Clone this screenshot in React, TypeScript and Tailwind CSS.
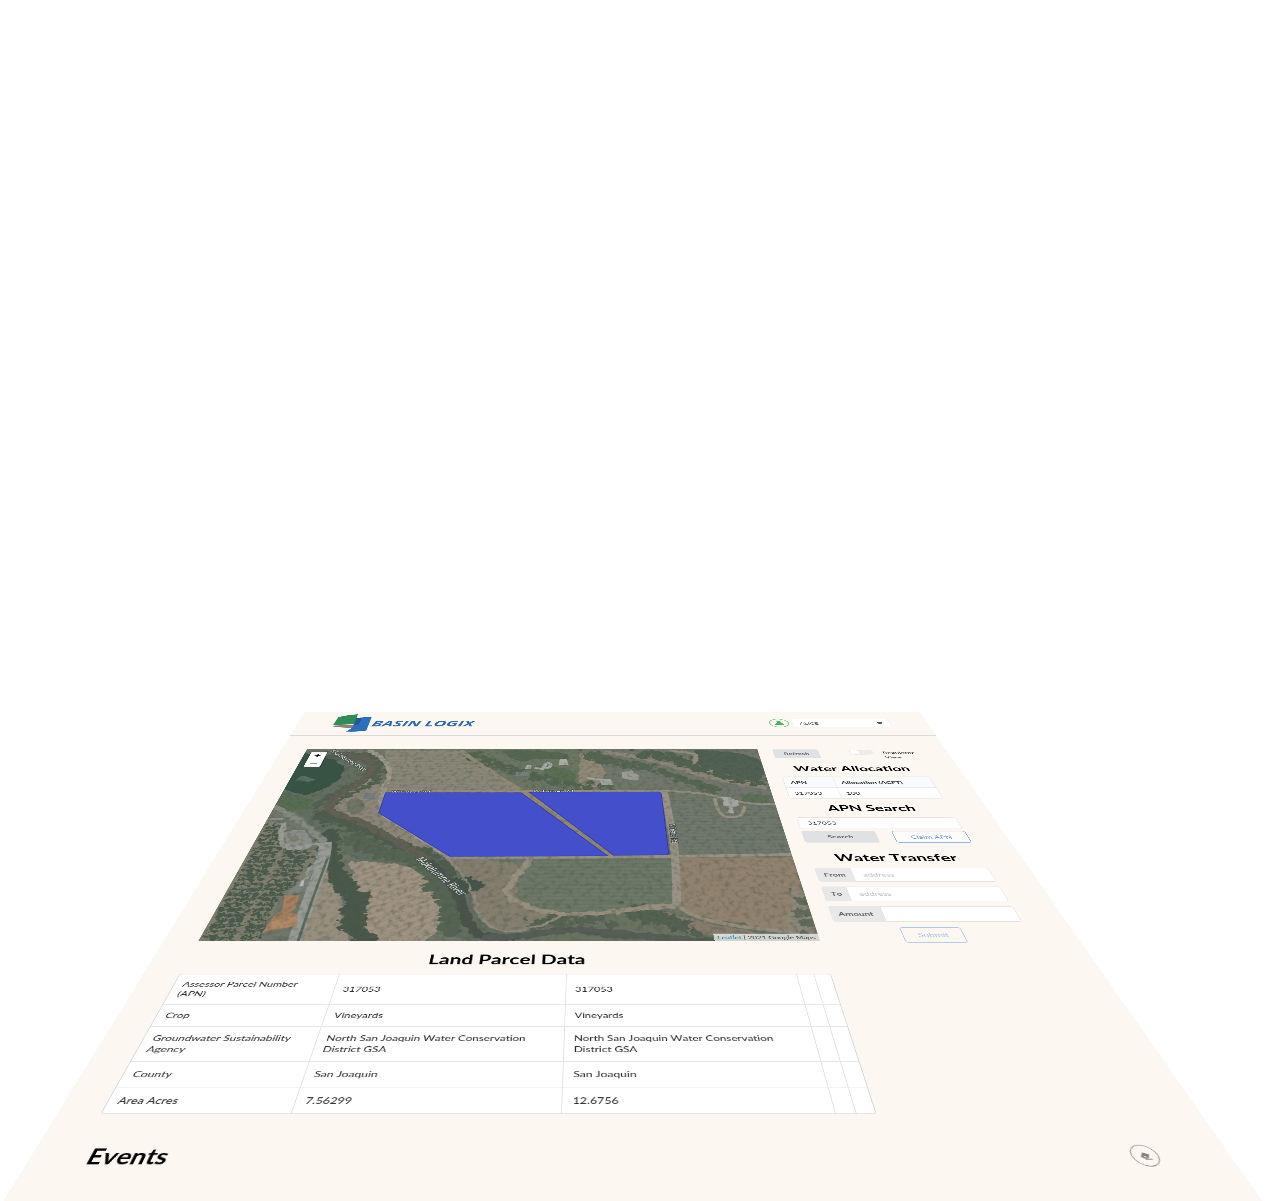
import React from "react";

const HORIZON_X = 592.4;
const HORIZON_Y = 245;
const DEPTH = 466.5;

/** Converts a point of the tilted view into the map's own flat coordinates. */
function flat(x: number, y: number): [number, number] {
  const d = DEPTH / (y - HORIZON_Y);
  return [((x - HORIZON_X) * d + 286.4) / 0.484 - 46.5, (1 - d) / 0.000425 - 175];
}

function parse(list: string): [number, number][] {
  return list.split(" ").map((p) => {
    const [x, y] = p.split(",").map(Number);
    return flat(x, y);
  });
}

function straight(list: string): string {
  return "M" + parse(list).map((p) => p.map((n) => n.toFixed(1)).join(",")).join("L");
}

function smooth(list: string): string {
  const p = parse(list);
  let out = `M${p[0][0]},${p[0][1]}`;
  for (let i = 1; i < p.length - 1; i++) {
    const mx = (p[i][0] + p[i + 1][0]) / 2;
    const my = (p[i][1] + p[i + 1][1]) / 2;
    out += `Q${p[i][0]},${p[i][1]} ${mx},${my}`;
  }
  const l = p[p.length - 1];
  return out + `L${l[0]},${l[1]}`;
}

const Area = ({ p, c, o }: { p: string; c: string; o?: number }) => <path d={smooth(p) + "Z"} fill={c} opacity={o} />;
const Field = ({ p, c }: { p: string; c: string }) => <path d={straight(p) + "Z"} fill={c} />;
const Track = ({ p, c, w }: { p: string; c: string; w: number }) => (
  <path d={smooth(p)} fill="none" stroke={c} strokeWidth={w} strokeLinejoin="round" />
);

const orchard = Array.from({ length: 1250 }, (_, i) => {
  const col = i % 42;
  const row = Math.floor(i / 42);
  const j = (i * 7919) % 13;
  return { x: col * 7.2 + (j % 5), y: 225 + row * 13 + (j % 4), w: 7 + (j % 4), h: 8 + (j % 5), skip: (i * 31) % 7 === 0 };
});

const trees = (list: string, n: number) => {
  const p = parse(list);
  return Array.from({ length: n }, (_, i) => {
    const t = (i / n) * (p.length - 1);
    const k = Math.floor(t);
    const f = t - k;
    const a = ((i * 37) % 29) - 14;
    const b = ((i * 53) % 31) - 15;
    return {
      x: p[k][0] + (p[k + 1][0] - p[k][0]) * f + a,
      y: p[k][1] + (p[k + 1][1] - p[k][1]) * f + b,
      r: 4 + ((i * 17) % 7),
    };
  });
};

const Grove = ({ p, n, c }: { p: string; n: number; c: string }) => (
  <g fill={c}>
    {trees(p, n).map((t, i) => (
      <ellipse key={i} cx={t.x} cy={t.y} rx={t.r} ry={t.r * 1.1} />
    ))}
  </g>
);

const MID_FIELD = "535,857 676,857 676,907 640,907 600,914 550,914 514,899";
const EAST_FIELD = "669,792 715,795 718,817 742,817 746,806 773,805 790,852 677,853";
const NORTH_FIELD = "385,750 465,750 522,792 386,792 391,772";
const TAN_FIELD = "350,860 400,863 418,870 440,893 446,905 437,930 420,945 375,945 360,925 361,900";

function Aerial() {
  return (
    <svg viewBox="0 0 861 600" className="block h-[600px] w-[861px]" preserveAspectRatio="none">
      <defs>
        <filter id="rough" x="0" y="0" width="100%" height="100%">
          <feTurbulence type="fractalNoise" baseFrequency="0.06" numOctaves="3" seed="4" />
          <feDisplacementMap in="SourceGraphic" scale="12" xChannelSelector="R" yChannelSelector="G" />
        </filter>
        <filter id="leafy" x="0" y="0" width="100%" height="100%">
          <feTurbulence type="fractalNoise" baseFrequency="0.12" numOctaves="3" seed="14" />
          <feDisplacementMap in="SourceGraphic" scale="16" xChannelSelector="R" yChannelSelector="G" />
        </filter>
        <filter id="grain" x="0" y="0" width="100%" height="100%" colorInterpolationFilters="sRGB">
          <feTurbulence type="fractalNoise" baseFrequency="0.11 0.09" numOctaves="4" seed="9" />
          <feColorMatrix values="0 0 0 0 0.22  0 0 0 0 0.28  0 0 0 0 0.22  2.2 0 0 0 -1" />
        </filter>
        <pattern id="rows" width="8" height="10" patternUnits="userSpaceOnUse">
          <rect width="8" height="4" fill="#3a4434" opacity="0.1" />
        </pattern>
        <pattern id="furrow" width="13" height="13" patternUnits="userSpaceOnUse" patternTransform="rotate(-32)">
          <rect width="13" height="4" fill="#6f6150" opacity="0.14" />
        </pattern>
        <clipPath id="orchardArea">
          <path d={straight("236,824 262,822 280,824 281,846 300,851 314,851 318,862 300,880 284,893 270,912 262,941 190,941") + "Z"} />
        </clipPath>
      </defs>
      <rect width="861" height="600" fill="#6b7264" />
      <g filter="url(#rough)">
        <Area p="325,750 370,755 385,775 350,800 400,815 460,860 500,930 520,941 440,941 440,890 400,862 350,860 320,830 280,800 250,820 290,775" c="#5c6759" />
        <Area p="290,752 320,754 345,763 343,776 330,786 313,794 300,794 285,790 280,775" c="#2c483b" />
        <Area p="300,776 310,777 318,779 308,782 299,780" c="#5f756b" o={0.7} />
        <Area p="285,791 300,797 316,799 303,812 276,808 274,798" c="#4f6648" />
        <Area p="368,776 386,783 378,812 395,825 440,852 400,842 360,822 330,808 334,797" c="#8b8374" />
        <Area p="350,798 368,800 362,815 345,812" c="#6d705f" />
        <Field p={NORTH_FIELD} c="#8a8574" />
        <Field p="470,750 580,750 578,791 530,791" c="#65705b" />
        <Area p="500,750 570,750 570,762 545,758 520,762" c="#4d6148" />
        <Area p="540,765 575,768 578,786 550,780" c="#53684c" />
        <Field p="580,752 598,756 618,768 604,774 602,786 579,788" c="#918573" />
        <Area p="590,750 640,750 700,765 770,778 776,800 700,786 640,784 610,775" c="#6d7268" />
        <Track p="605,752 650,758 680,768 720,780 768,788" c="#8b8276" w={16} />
        <Area p="695,750 757,750 768,783 735,776 702,767 690,760" c="#46594a" />
        <Track p="668,750 692,752 697,758 690,764 700,768 730,777 768,785" c="#928a7c" w={10} />
        <Field p={EAST_FIELD} c="#6c7568" />
        <Field p="740,793 768,795 772,804 744,804" c="#566b4f" />
        <Field p="680,857 792,857 818,941 760,941 700,922 677,905" c="#917f6a" />
        <Area p="791,885 803,895 818,941 785,930 792,910" c="#8c8574" />
        <Field p={MID_FIELD} c="#697563" />
        <Area p="450,857 528,857 512,895 545,914 560,922 495,932 478,918 472,895" c="#827a6a" />
        <Area p="560,915 640,906 690,915 820,937 820,945 480,945" c="#656e5c" />
        <Area p="640,905 700,922 780,935 700,938 655,920" c="#847868" />
        <Field p="232,822 282,822 284,848 316,850 320,862 286,893 264,925 262,945 190,945" c="#7f7b6a" />
        <Area p={TAN_FIELD} c="#a19281" />
        <Field p="326,868 334,880 343,900 342,922 352,945 298,945" c="#998c7b" />
      </g>
      <g filter="url(#leafy)">
        <g clipPath="url(#orchardArea)" fill="#3f5245">
          {orchard.map((o, i) => (o.skip ? null : <ellipse key={i} cx={o.x} cy={o.y} rx={o.w / 2} ry={o.h / 2} />))}
        </g>
        <Grove p="333,755 368,756 380,768 368,782 342,795 322,809" n={60} c="#4b5948" />
        <Grove p="322,812 345,822 380,836 410,850 440,868 450,885" n={100} c="#445444" />
        <Grove p="330,830 332,860 342,882 355,900 352,925 368,938" n={110} c="#3f5041" />
        <Grove p="350,835 385,855 425,858 435,880 450,900 452,930" n={110} c="#4d5d4b" />
        <Grove p="588,753 612,762 650,768 700,785 718,790" n={60} c="#505f48" />
        <Grove p="640,753 670,756 690,766 730,778 768,782" n={50} c="#4a5a47" />
        <Grove p="470,752 492,764 520,772 560,784 620,787" n={46} c="#4c5c47" />
        <Grove p="535,925 552,918 580,922 612,920" n={20} c="#505b4b" />
        <Grove p="632,908 650,915 670,922 690,930" n={26} c="#4c5a49" />
        <Grove p="458,880 478,890" n={14} c="#3b4c40" />
        <Grove p="802,895 806,915 812,932" n={12} c="#5b6456" />
      </g>
      <path d={smooth(TAN_FIELD) + "Z"} fill="url(#furrow)" />
      <path d={straight(MID_FIELD) + "Z"} fill="url(#rows)" />
      <path d={straight(EAST_FIELD) + "Z"} fill="url(#rows)" />
      <path d={straight(NORTH_FIELD) + "Z"} fill="url(#rows)" opacity="0.6" />
      <g filter="url(#rough)">
        <Track p="333,753 357,755 372,762 373,770 363,782 340,793 327,807 333,813 363,822 387,835 403,845 430,860" c="#5b584e" w={16} />
        <Track p="430,860 445,877 457,890 463,907 470,927 483,937 520,937" c="#404a41" w={15} />
        <Track p="483,937 520,937 567,928 607,933 660,937 720,942" c="#50564e" w={16} />
        <Track p="369,750 383,756 391,771 385,785 378,812 410,830 449,857" c="#a1998b" w={10} />
        <Track p="449,858 475,890 480,920 500,931 540,927 560,915" c="#91887a" w={5} />
        <Track p="532,857 520,872 505,890 512,900 550,914 600,914 640,907 676,906" c="#988e7c" w={11} />
        <Track p="236,822 270,820 284,818" c="#8f9088" w={8} />
        <Track p="276,806 300,820 326,842" c="#858980" w={12} />
        <Area p="284,832 298,826 314,838 310,846 288,846" c="#8b8e86" />
        <Track p="284,822 281,835 282,846 300,849 318,841 323,850 315,865 303,882" c="#979b94" w={9} />
        <Area p="300,882 312,874 306,893 283,894" c="#7b827c" />
      </g>
      <Area p="291,836 297,834 301,839 295,842 290,840" c="#7d7b6c" />
      <Track p="461,750 490,772 528,793 612,857" c="#8f866f" w={10} />
      <Track p="386,790 530,791 660,790 707,793 742,803 776,804" c="#938d7f" w={7} />
      <Track p="446,857 560,857 680,856 795,854" c="#989184" w={8} />
      <Track p="664,790 671,822 676,857 677,905" c="#9a9285" w={13} />
      <Track p="677,904 690,915 730,925 800,933" c="#968b79" w={8} />
      <Track p="326,842 326,856 313,890 292,950" c="#989b95" w={20} />
      <Track p="328,858 316,890 297,945" c="#55644f" w={4} />
      <Field p="285,895 300,895 296,908 290,912 298,914 297,926 270,930 262,933 275,915 283,909" c="#a97b57" />
      <Field p="272,921 297,915 297,925 272,929" c="#b38862" />
      <Field p="302,880 305,880 304,886 300,886" c="#bcc0be" />
      <Field p="366,793 376,793 375,799 363,799" c="#6b7b83" />
      <Field p="560,759 567,759 569,765 559,765" c="#b0b2ab" />
      <Field p="527,765 532,765 531,769 525,769" c="#a8aea8" />
      <Track p="535,768 548,769 552,764 547,762 542,770" c="#aab2ad" w={7} />
      <Field p="516,772 530,772 530,776 516,776" c="#717d79" />
      <Field p="588,777 611,779 614,785 602,785 600,780 588,779" c="#a1a6a2" />
      <Field p="622,772 632,770 640,776 638,781 622,778" c="#9b9b92" />
      <g filter="url(#rough)">
        <Field p="721,796 731,797 733,800 740,801 738,806 733,806 735,813 726,813 730,806 724,806" c="#a8aaa3" />
      </g>
      <Track p="715,798 718,817 742,817 745,806" c="#9a9082" w={6} />
      <rect width="861" height="600" filter="url(#grain)" opacity="0.45" />
      <rect width="861" height="600" fill="#949993" opacity="0.12" />
      <g fontFamily='"Open Sans", sans-serif' fill="#eceeec" stroke="#3c4745" strokeWidth="2.5" paintOrder="stroke" fontSize="16">
        <text transform="translate(46 9) rotate(46)" textLength="116">Mokelumne River</text>
        <text transform="translate(268 390) rotate(51)" textLength="130" lengthAdjust="spacingAndGlyphs" fontSize="19">Mokelumne River</text>
        <text x="192" y="174" fontSize="12" textLength="68">W Turner Rd</text>
        <text x="442" y="172" fontSize="12" textLength="70">W Turner Rd</text>
        <text transform="translate(674 280) rotate(90)" fontSize="13" textLength="62">N Tretter Rd</text>
      </g>
      <g fill="#4450cb" stroke="#3038a8" strokeWidth="1.5">
        <path d={straight("386,792.5 521.5,792.5 608,855.5 450,856 379,812.5") + "Z"} />
        <path d={straight("530,792 659,791.5 661.5,793 669,853 667.5,854.5 614,855") + "Z"} />
      </g>
    </svg>
  );
}

const parcels = [
  { label: "Assessor Parcel Number (APN)", a: "317053", b: "317053", h: "h-[59px]" },
  { label: "Crop", a: "Vineyards", b: "Vineyards", h: "h-[41px]" },
  {
    label: "Groundwater Sustainability Agency",
    a: "North San Joaquin Water Conservation District GSA",
    b: "North San Joaquin Water Conservation District GSA",
    h: "h-[60px]",
  },
  { label: "County", a: "San Joaquin", b: "San Joaquin", h: "h-[41px]" },
  { label: "Area Acres", a: "7.56299", b: "12.6756", h: "h-[40px]" },
];

function Header() {
  return (
    <header className="flex h-[116px] border-b-3 border-[#dedad5]">
      <svg viewBox="0 0 80 88" className="mt-[12px] ml-[68px] h-[88px] w-[80px] shrink-0">
        <path d="M6 57 L46 54 L47 68 Q24 67 6 61Z" fill="#8b8179" />
        <path d="M7 16 Q24 5 44 2 L47 51 Q25 51 5 56Z" fill="#2f8d55" />
        <path d="M45 20 L75 14 L77 80 Q60 87 38 85 L46 68Z" fill="#2b6fbd" />
        <path d="M45 20 L56 18 L56 55 L47 56Z" fill="#28598f" />
      </svg>
      <svg className="mt-[36px] ml-[2px] h-[48px] w-[214px] shrink-0 overflow-visible" viewBox="0 0 214 48">
        <text x="0" y="37" fontFamily='"Open Sans", sans-serif' fontWeight="700" fontStyle="italic" fontSize="37" textLength="205" lengthAdjust="spacingAndGlyphs" fill="#2c6ab5">
          BASIN LOGIX
        </text>
      </svg>
      <div className="mt-[37px] ml-[586px] flex h-10 w-10 items-center justify-center rounded-full border-2 border-[#7acb86]">
        <svg viewBox="0 0 18 20" className="h-[20px] w-[18px]" fill="#45b658">
          <path d="M5 2h8v6l3 3v3H2v-3l3-3z" />
          <rect x="0" y="15" width="18" height="3" />
        </svg>
      </div>
      <div className="mt-[38px] ml-[6px] flex h-[38px] w-[198px] items-center justify-between rounded border border-[#ece9e6] bg-white px-[14px]">
        <span className="pt-[3px]">ALICE</span>
        <svg viewBox="0 0 12 12" className="h-3 w-3" fill="#555">
          <path d="M1 2h10v4L8 10H4L1 6z" />
        </svg>
      </div>
    </header>
  );
}

function LabeledInput({ label, width, placeholder }: { label: string; width: string; placeholder?: string }) {
  return (
    <div className="mb-[13px] flex h-[38px] w-[269px]">
      <div className={`flex shrink-0 items-center rounded-l-sm bg-[#e8e8e8] pl-[11px] font-bold text-[#666] ${width}`}>{label}</div>
      <div className="flex grow items-center rounded-r-sm border border-[#e4e2e1] bg-white pl-[15px] text-[#bfbfbf]">{placeholder}</div>
    </div>
  );
}

const sectionTitle = "flex w-[268px] justify-center text-[28px] leading-9 font-bold text-black";

function Sidebar() {
  return (
    <aside className="ml-[28px] w-[272px] pt-px">
      <div className="flex h-[36px]">
        <div className="flex w-[94px] items-center justify-center rounded-sm bg-[#dfe1e3] pb-px font-bold text-[#666]">Refresh</div>
        <div className="mt-px ml-[58px] flex h-[21px] w-[50px] rounded-full bg-[#f0ebe6]">
          <div className="h-[21px] w-[21px] rounded-full border border-[#dcd9d6] bg-white" />
        </div>
        <div className="mt-[4px] ml-[17px] w-[70px] leading-[19px]">Regulator View</div>
      </div>
      <h1 className={`h-[75px] items-end pb-[14px] ${sectionTitle}`}>Water Allocation</h1>
      <div className="w-[268px] overflow-hidden rounded-sm border border-[#e4e2e1] bg-white">
        <div className="flex h-[41px] border-b border-[#e6e6e7] bg-[#f9fafb] font-bold">
          <div className="flex w-[91px] items-center border-r border-[#e6e6e7] pt-[3px] pl-[11px]">APN</div>
          <div className="flex items-center pt-[3px] pl-[11px]">Allocation (ACFT)</div>
        </div>
        <div className="flex h-[39px]">
          <div className="flex w-[91px] items-center border-r border-[#e6e6e7] pt-[3px] pl-[11px]">317053</div>
          <div className="flex items-center pt-[3px] pl-[11px]">100</div>
        </div>
      </div>
      <h1 className={`h-[65px] items-center ${sectionTitle}`}>APN Search</h1>
      <div className="flex h-[38px] w-[268px] items-center rounded-sm border border-[#e4e2e1] bg-white pl-[14px]">317053</div>
      <div className="mt-[7px] flex h-[36px]">
        <div className="flex w-[121px] items-center justify-center rounded-sm bg-[#dfe1e3] font-bold text-[#666]">Search</div>
        <div className="ml-[27px] flex w-[121px] items-center justify-center rounded-sm border-[1.5px] border-[#5f8fe0] bg-white/60 pt-px text-[#5f8fe0]">Claim APN</div>
      </div>
      <h1 className={`h-[75px] items-center pt-[14px] ${sectionTitle}`}>Water Transfer</h1>
      <LabeledInput label="From" width="w-[55px]" placeholder="address" />
      <LabeledInput label="To" width="w-[37px]" placeholder="address" />
      <LabeledInput label="Amount" width="w-[75px]" />
      <div className="ml-[90px] flex h-[36px] w-[86px] items-center justify-center rounded-sm border-[1.5px] border-[#9fbfe8] text-[#9fbfe8]">Submit</div>
    </aside>
  );
}

export default function App() {
  return (
    <div className="h-[1201px] w-[1265px] overflow-hidden bg-white">
      <div className="h-[1212px] w-[1269px] origin-top-left overflow-hidden bg-[#fcf7f1] font-[Lato,sans-serif] text-[14px] leading-[20px] text-[#262626] [font-kerning:none] [font-variant-ligatures:none] [transform:matrix3d(0.484,0,0,0,-0.25177,-0.104125,0,-0.000425,0,0,1,0,305.03,711.5,0,1)]">
        <Header />
        <main className="mt-[60px] flex pl-[48px]">
          <section className="w-[861px]">
            <div className="relative h-[600px] overflow-hidden">
              <Aerial />
              <div className="absolute top-[10px] left-[10px] w-[34px] rounded border-2 border-black/20 bg-white bg-clip-padding text-center font-['Liberation_Sans',sans-serif] text-[22px] font-bold text-black">
                <div className="h-[31px] border-b border-[#ccc] leading-[30px]">+</div>
                <div className="flex h-[30px] items-center justify-center">
                  <span className="h-[3px] w-[13px] bg-[#333]" />
                </div>
              </div>
              <div className="absolute right-0 bottom-0 bg-white/70 px-[5px] font-[Lato,sans-serif] text-[11.2px] leading-[17px] text-[#333]">
                <span className="text-[#0078a8]">Leaflet</span> | 2021 Google Maps
              </div>
            </div>
            <h1 className="flex h-[71px] items-center justify-center pt-[9px] text-[28px] font-bold text-black">Land Parcel Data</h1>
            <div className="overflow-hidden rounded border border-[#d4d4d5] bg-white leading-[19px]">
              {parcels.map((row, i) => (
                <div key={row.label} className={`flex ${row.h} ${i ? "border-t border-[#e2e3e4]" : ""}`}>
                  <div className="flex w-[210px] items-center pb-px pl-[11px]">
                    <span className="w-[172px]">{row.label}</span>
                  </div>
                  <div className="flex w-[301px] items-center border-l border-[#dedfe0] px-[11px] pb-px">
                    <span className="w-[256px]">{row.a}</span>
                  </div>
                  <div className="flex w-[304px] items-center border-l border-[#dedfe0] px-[11px] pb-px">
                    <span className="w-[256px]">{row.b}</span>
                  </div>
                  <div className="w-[23px] border-l border-[#dedfe0]" />
                  <div className="w-[22px] border-l border-[#dedfe0]" />
                </div>
              ))}
            </div>
          </section>
          <Sidebar />
        </main>
        <div className="mt-[37px] flex h-[40px] items-center justify-between pr-[76px] pl-[61px]">
          <h1 className="pt-px text-[28px] font-bold text-black">Events</h1>
          <div className="flex h-[29px] w-[29px] items-center justify-center rounded-full border-[1.5px] border-[#8a8783]">
            <svg viewBox="-7 -7 14 14" className="h-[14px] w-[14px]">
              <path d="M-5.6 2.2 L-1.5 -3.8 L4.8 -1 L2 4 L-1.5 5Z" fill="#85827f" />
              <path d="M-2.5 .5 L1 2 L-1 3.6Z" fill="#e8e4df" />
              <path d="M-2 5.3 H5.4" stroke="#85827f" strokeWidth="1.1" />
            </svg>
          </div>
        </div>
      </div>
    </div>
  );
}
